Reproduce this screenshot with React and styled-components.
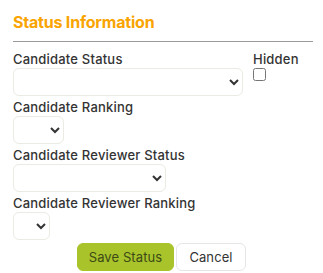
import React from "react";
import styled, { createGlobalStyle } from "styled-components";

const Global = createGlobalStyle`
  html, body { margin: 0; padding: 0; background: #fff; }
  body { font-family: Inter, "Noto Sans", sans-serif; }
`;

const Panel = styled.div`
  width: 300px;
  padding: 12px 0 0 13px;
`;

const Title = styled.h2`
  margin: 0;
  padding-bottom: 9px;
  font-size: 16px;
  line-height: 20px;
  font-weight: 700;
  color: #f9a400;
  border-bottom: 1px solid #9a9a9a;
  letter-spacing: -0.2px;
`;

const TopRow = styled.div`
  display: flex;
  gap: 10px;
  margin-top: 8px;
`;

const Field = styled.div`
  display: flex;
  flex-direction: column;
  align-items: flex-start;
  margin-bottom: 2px;
`;

const Label = styled.label`
  font-size: 13px;
  line-height: 18px;
  font-weight: 500;
  color: #333;
  letter-spacing: 0.2px;
  white-space: nowrap;
`;

const Select = styled.select`
  width: ${(p) => p.$w}px;
  height: 28px;
  box-sizing: border-box;
  border: 1px solid #ebebe3;
  border-radius: 6px;
  background: #fff;
  font-family: inherit;
  font-size: 13px;
  color: #333;
  margin: 0;
  padding: 0 4px;
`;

const Check = styled.input`
  width: 13px;
  height: 13px;
  margin: 0;
`;

const Actions = styled.div`
  display: flex;
  justify-content: center;
  gap: 2px;
  margin-top: 3px;
  margin-left: -13px;
  width: 323px;
`;

const Button = styled.button`
  height: 28px;
  width: ${(p) => p.$w}px;
  border-radius: 6px;
  font-family: inherit;
  font-size: 13px;
  letter-spacing: 0.1px;
  padding: 0;
  cursor: pointer;
  background: ${(p) => (p.$primary ? "#a8c42a" : "#fff")};
  color: ${(p) => (p.$primary ? "#3d4a17" : "#333")};
  border: 1px solid ${(p) => (p.$primary ? "#a8c42a" : "#e6e6e6")};
`;

export default function App() {
  return (
    <>
      <Global />
      <Panel>
        <Title>Status Information</Title>
        <TopRow>
          <Field>
            <Label>Candidate Status</Label>
            <Select $w={230}><option></option></Select>
          </Field>
          <Field>
            <Label>Hidden</Label>
            <Check type="checkbox" />
          </Field>
        </TopRow>
        <Field>
          <Label>Candidate Ranking</Label>
          <Select $w={51}><option></option></Select>
        </Field>
        <Field>
          <Label>Candidate Reviewer Status</Label>
          <Select $w={153}><option></option></Select>
        </Field>
        <Field>
          <Label>Candidate Reviewer Ranking</Label>
          <Select $w={37}><option></option></Select>
        </Field>
        <Actions>
          <Button $primary $w={97}>Save Status</Button>
          <Button $w={70}>Cancel</Button>
        </Actions>
      </Panel>
    </>
  );
}
